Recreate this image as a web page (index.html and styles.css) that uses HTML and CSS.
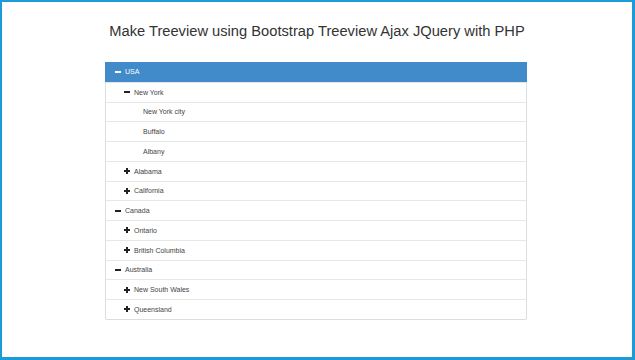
FILE: index.html
```html
<!DOCTYPE html>
<html lang="en">
<head>
    <meta charset="UTF-8">
    <title>Make Treeview using Bootstrap Treeview Ajax JQuery with PHP</title>
    <link rel="stylesheet" href="styles.css">
</head>
<body>
    <div class="frame">
        <h1>Make Treeview using Bootstrap Treeview Ajax JQuery with PHP</h1>
        <ul class="tree">
            <li class="node active"><span class="icon minus"></span>USA</li>
            <li class="node"><span class="indent"></span><span class="icon minus"></span>New York</li>
            <li class="node"><span class="indent"></span><span class="indent"></span><span class="icon"></span>New York city</li>
            <li class="node"><span class="indent"></span><span class="indent"></span><span class="icon"></span>Buffalo</li>
            <li class="node"><span class="indent"></span><span class="indent"></span><span class="icon"></span>Albany</li>
            <li class="node"><span class="indent"></span><span class="icon plus"></span>Alabama</li>
            <li class="node"><span class="indent"></span><span class="icon plus"></span>California</li>
            <li class="node"><span class="icon minus"></span>Canada</li>
            <li class="node"><span class="indent"></span><span class="icon plus"></span>Ontario</li>
            <li class="node"><span class="indent"></span><span class="icon plus"></span>British Columbia</li>
            <li class="node"><span class="icon minus"></span>Australia</li>
            <li class="node"><span class="indent"></span><span class="icon plus"></span>New South Wales</li>
            <li class="node"><span class="indent"></span><span class="icon plus"></span>Queensland</li>
        </ul>
    </div>
</body>
</html>
```

FILE: styles.css
```css
html, body {
    margin: 0;
    height: 100%;
}
body {
    font-family: 'Liberation Sans', Arial, sans-serif;
    background: #fff;
}
.frame {
    box-sizing: border-box;
    height: 360px;
    border: 2px solid #1b9bd7;
    border-right-width: 3px;
    border-bottom-width: 3px;
    padding-top: 19px;
}
h1 {
    margin: 0 0 21px 0;
    text-align: center;
    font-weight: normal;
    font-size: 14.7px;
    line-height: 20px;
    color: #333;
}
.tree {
    list-style: none;
    margin: 0 0 0 103px;
    padding: 0;
    width: 420px;
    border: 1px solid #ddd;
    border-radius: 2px;
}
.node {
    display: flex;
    align-items: center;
    height: 18.75px;
    padding-left: 9px;
    font-size: 7px;
    color: #444;
    border-top: 1px solid #e6e6e6;
}
.node:first-child {
    border-top: none;
}
.node.active {
    background-color: #428bca;
    color: #fff;
    margin: -1px -1px 0 -1px;
    padding-left: 10px;
    height: 19.75px;
}
.indent {
    display: inline-block;
    width: 9px;
}
.icon {
    display: inline-block;
    position: relative;
    width: 6px;
    height: 6px;
    margin-right: 4px;
}
.icon.minus::before,
.icon.plus::before,
.icon.plus::after {
    content: "";
    position: absolute;
    background: #222;
}
.icon.minus::before,
.icon.plus::before {
    left: 0;
    top: 2px;
    width: 6px;
    height: 2px;
}
.icon.plus::after {
    left: 2px;
    top: 0;
    width: 2px;
    height: 6px;
}
.active .icon.minus::before {
    background: #fff;
}
```
